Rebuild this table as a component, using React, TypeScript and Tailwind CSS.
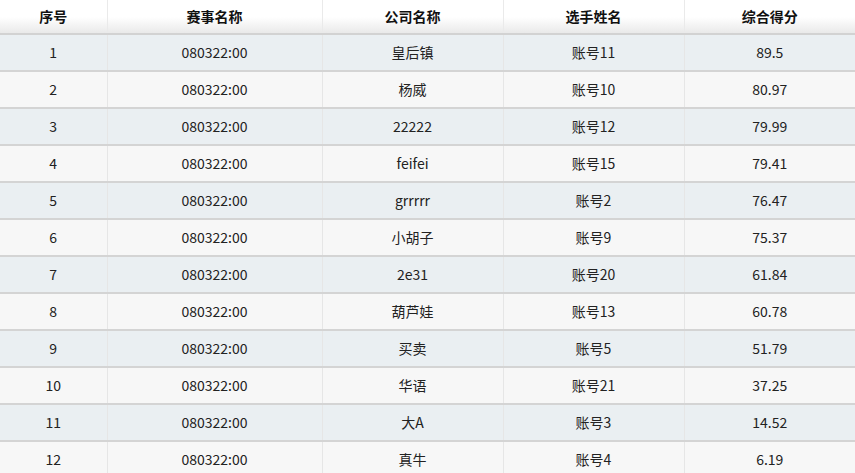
import React from "react";

const rows = [
  ["1", "080322:00", "皇后镇", "账号11", "89.5"],
  ["2", "080322:00", "杨威", "账号10", "80.97"],
  ["3", "080322:00", "22222", "账号12", "79.99"],
  ["4", "080322:00", "feifei", "账号15", "79.41"],
  ["5", "080322:00", "grrrrr", "账号2", "76.47"],
  ["6", "080322:00", "小胡子", "账号9", "75.37"],
  ["7", "080322:00", "2e31", "账号20", "61.84"],
  ["8", "080322:00", "葫芦娃", "账号13", "60.78"],
  ["9", "080322:00", "买卖", "账号5", "51.79"],
  ["10", "080322:00", "华语", "账号21", "37.25"],
  ["11", "080322:00", "大A", "账号3", "14.52"],
  ["12", "080322:00", "真牛", "账号4", "6.19"],
];

const headers = ["序号", "赛事名称", "公司名称", "选手姓名", "综合得分"];
const widths = ["w-[107px]", "w-[215px]", "w-[181px]", "w-[181px]", "w-[171px]"];

export default function App() {
  return (
    <div
      className="w-[855px] h-[473px] overflow-hidden bg-white text-[14px] text-[#222]"
      style={{ fontFamily: '"Microsoft YaHei", "Noto Sans CJK SC", sans-serif' }}
    >
      <table className="w-[855px] table-fixed border-collapse">
        <thead>
          <tr className="h-[34px] bg-gradient-to-b from-white via-white to-[#e8e8e8]">
            {headers.map((h, i) => (
              <th
                key={h}
                className={`${widths[i]} border-b-2 border-b-[#d2d2d2] border-r border-r-[#eaeaea] last:border-r-0 p-0 text-center font-bold text-[#111]`}
              >
                {h}
              </th>
            ))}
          </tr>
        </thead>
        <tbody>
          {rows.map((r, idx) => (
            <tr
              key={idx}
              className={`h-[37px] ${idx % 2 === 0 ? "bg-[#eaeff2]" : "bg-[#f7f7f7]"}`}
            >
              {r.map((c, i) => (
                <td
                  key={i}
                  className="border-b-2 border-b-[#d4d4d4] border-r border-r-[#e6e6e6] last:border-r-0 p-0 text-center"
                >
                  {c}
                </td>
              ))}
            </tr>
          ))}
        </tbody>
      </table>
    </div>
  );
}
